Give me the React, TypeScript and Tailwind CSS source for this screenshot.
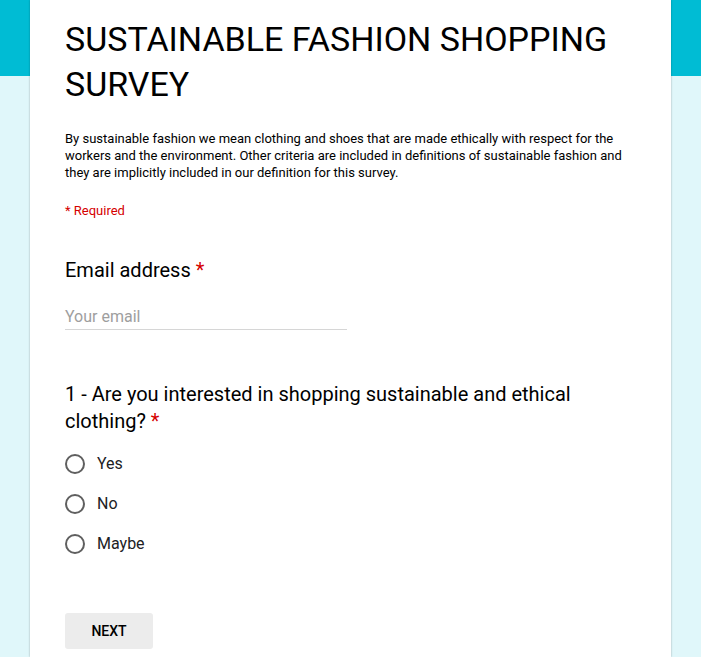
import React from "react";

function Radio({ label }: { label: string }) {
  return (
    <label className="flex items-center h-[40px] cursor-pointer">
      <span className="w-[20px] h-[20px] rounded-full border-2 border-[#5f5f5f] box-border" />
      <span className="ml-[12px] text-[16px] text-[#202124]">{label}</span>
    </label>
  );
}

export default function App() {
  return (
    <div
      className="min-h-[657px] bg-[linear-gradient(to_bottom,#00bcd4_76px,#e0f7fa_76px)]"
      style={{ fontFamily: "Roboto, 'Liberation Sans', sans-serif" }}
    >
      <div className="mx-[30px] min-h-[657px] bg-white shadow-[0_0_2px_rgba(0,0,0,0.3)] pl-[35px] pr-[40px] pt-[17px] pb-[8px]">
        <h1 className="text-[34px] leading-[45px] text-black font-normal">
          SUSTAINABLE FASHION SHOPPING SURVEY
        </h1>
        <p className="mt-[23px] text-[13px] leading-[17px] text-black">
          By sustainable fashion we mean clothing and shoes that are made ethically with respect for the
          workers and the environment. Other criteria are included in definitions of sustainable fashion and
          they are implicitly included in our definition for this survey.
        </p>
        <div className="mt-[21px] text-[13px] leading-[17px] text-[#d50000]">* Required</div>

        <div className="mt-[38px]">
          <div className="text-[20px] leading-[27px] text-black">
            Email address <span className="text-[#d50000]">*</span>
          </div>
          <div className="mt-[21px] w-[282px] border-b border-[#d6d6d6]">
            <span className="text-[16px] leading-[22px] text-[#9e9e9e]">Your email</span>
          </div>
        </div>

        <div className="mt-[51px]">
          <div className="text-[20px] leading-[27px] text-black">
            1 - Are you interested in shopping sustainable and ethical clothing?{" "}
            <span className="text-[#d50000]">*</span>
          </div>
          <div className="mt-[9px] flex flex-col">
            <Radio label="Yes" />
            <Radio label="No" />
            <Radio label="Maybe" />
          </div>
        </div>

        <button className="mt-[49px] w-[88px] h-[36px] rounded-[3px] bg-[#ececec] text-[14px] font-medium text-black">
          NEXT
        </button>
      </div>
    </div>
  );
}
